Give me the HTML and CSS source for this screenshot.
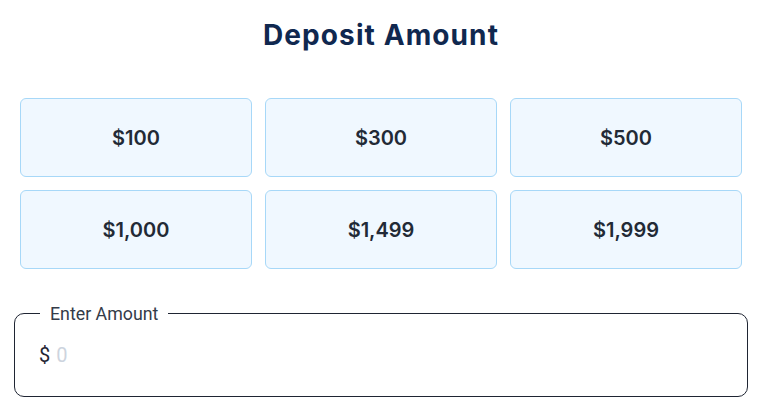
FILE: index.html
```html
<!DOCTYPE html>
<html lang="en">
<head>
    <meta charset="UTF-8">
    <meta name="viewport" content="width=device-width, initial-scale=1.0">
    <title>Deposit Amount</title>
    <link rel="stylesheet" href="styles.css">
</head>
<body>
    <div class="container">
        <h1>Deposit Amount</h1>

        <div class="amounts">
            <button class="amount">$100</button>
            <button class="amount">$300</button>
            <button class="amount">$500</button>
            <button class="amount">$1,000</button>
            <button class="amount">$1,499</button>
            <button class="amount">$1,999</button>
        </div>

        <fieldset class="custom">
            <legend>Enter Amount</legend>
            <div class="field">
                <span class="currency">$</span>
                <input type="text" placeholder="0">
            </div>
        </fieldset>
    </div>
</body>
</html>
```

FILE: styles.css
```css
body {
    margin: 0;
    background-color: #fff;
    font-family: Inter, "Open Sans", sans-serif;
}
.container {
    width: 734px;
    margin-left: 14px;
}
h1 {
    margin: 0;
    padding-top: 18px;
    text-align: center;
    font-size: 28px;
    font-weight: 700;
    color: #10284f;
    letter-spacing: 1.1px;
}
.amounts {
    display: grid;
    grid-template-columns: repeat(3, 1fr);
    gap: 13px;
    padding: 0 6px;
    margin-top: 46px;
}
.amount {
    height: 79px;
    border: 1px solid #a7d8f8;
    border-radius: 6px;
    background-color: #f0f8ff;
    font-family: Inter, sans-serif;
    font-size: 20px;
    font-weight: 600;
    color: #222a36;
    cursor: pointer;
}
.custom {
    margin: 34px 0 0;
    padding: 0 24px 16px;
    border: 1px solid #1f2533;
    border-radius: 10px;
    height: 94px;
    box-sizing: border-box;
}
.custom legend {
    margin-left: 1px;
    padding: 0 10px;
    font-family: Roboto, sans-serif;
    font-size: 17.8px;
    color: #343b49;
}
.field {
    display: flex;
    align-items: center;
    gap: 6px;
    margin-top: 19px;
}
.currency {
    font-family: Roboto, sans-serif;
    font-size: 20px;
    color: #1f2533;
}
.field input {
    border: none;
    outline: none;
    flex: 1;
    padding: 0;
    font-family: Roboto, sans-serif;
    font-size: 20px;
    color: #1f2533;
}
.field input::placeholder {
    color: #cdd4de;
}
```
